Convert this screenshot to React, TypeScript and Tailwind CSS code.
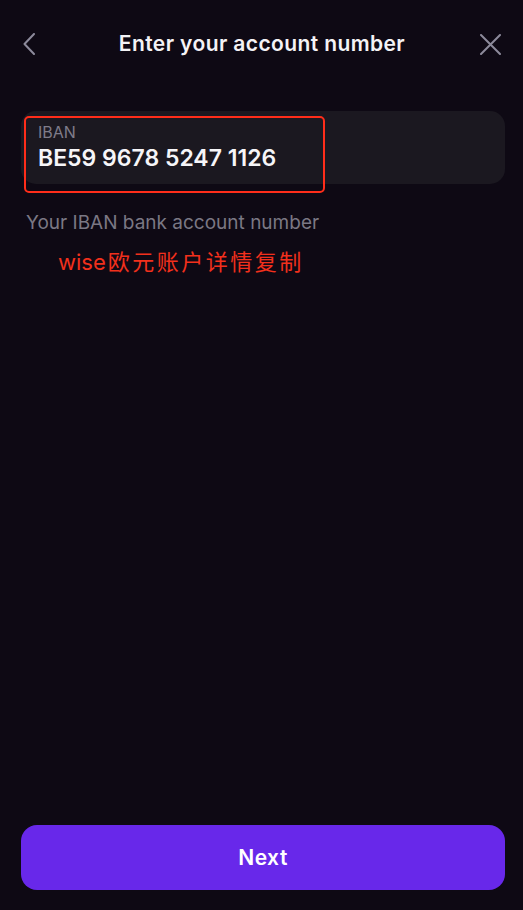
export default function App() {
  return (
    <div className="flex h-[910px] w-[523px] flex-col bg-[#0e0914] font-['Inter','Noto_Sans_CJK_SC',sans-serif] text-white">
      {/* header */}
      <div className="mt-[24px] grid h-10 grid-cols-[40px_1fr_40px] items-center pl-[23px] pr-[22px]">
        <button className="flex items-center">
          <svg width="12" height="22" viewBox="0 0 12 22" fill="none">
            <polyline
              points="11,1 1.5,11 11,21"
              stroke="#8c8a9b"
              strokeWidth="2"
              strokeLinecap="round"
              strokeLinejoin="round"
            />
          </svg>
        </button>
        <h1 className="text-center text-[21px] font-semibold tracking-[0.4px] text-[#f4f3f6]">
          Enter your account number
        </h1>
        <button className="flex justify-end">
          <svg width="21" height="21" viewBox="0 0 21 21" fill="none">
            <path d="M1 1 20 20M20 1 1 20" stroke="#8c8a9b" strokeWidth="2" strokeLinecap="round" />
          </svg>
        </button>
      </div>

      {/* IBAN field */}
      <div className="relative ml-[21px] mr-[18px] mt-[47px] h-[73px] rounded-[15px] bg-[#1b1820] pl-[17px] pt-[11px]">
        <div className="text-[16px] leading-[20px] text-[#7f7c8a]">IBAN</div>
        <div className="mt-[2px] text-[23px] font-semibold leading-[28px] text-[#f6f5f8]">
          BE59 9678 5247 1126
        </div>
        <div className="pointer-events-none absolute left-[3px] top-[5px] h-[77px] w-[301px] rounded-[5px] border-2 border-[#ff2d1a]" />
      </div>

      <p className="ml-[26px] mt-[27px] text-[19px] leading-6 text-[#7b7884]">
        Your IBAN bank account number
      </p>
      <p className="ml-[58px] mt-[13px] leading-7 text-[#f2301c]">
        <span className="text-[22px]">wise</span>
        <span className="ml-[2px] text-[22px] tracking-[2.5px]">欧元账户详情复制</span>
      </p>

      {/* footer */}
      <button className="mb-[20px] ml-[21px] mr-[18px] mt-auto h-[65px] rounded-[16px] bg-[#6828ea] text-[21px] font-semibold tracking-[0.5px] text-white">
        Next
      </button>
    </div>
  )
}
